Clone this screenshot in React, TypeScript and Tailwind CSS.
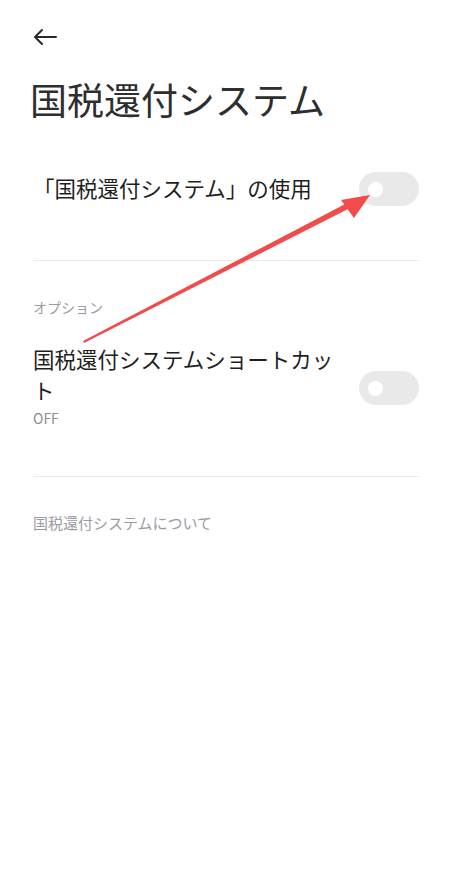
import React from 'react';

const font = { fontFamily: '"Noto Sans CJK JP", "Noto Sans", sans-serif' };

const Toggle = ({ className = '' }: { className?: string }) => (
    <div className={`w-[60px] h-[34px] rounded-full bg-[#e9e9e9] flex items-center pl-[9px] shrink-0 ${className}`}>
        <div className="w-[15px] h-[15px] rounded-full bg-white" />
    </div>
);

export default function App() {
    return (
        <div className="relative w-[454px] h-[878px] bg-white text-[#1f1f1f] overflow-hidden" style={font}>
            {/* header */}
            <div className="pl-[32px] pt-[26px]">
                <svg width="26" height="22" viewBox="0 0 26 22" fill="none" stroke="#2a2a2a" strokeWidth="2" strokeLinecap="round" strokeLinejoin="round">
                    <path d="M24 11H3M10 4l-7 7 7 7" />
                </svg>
            </div>
            <h1 className="pl-[30px] mt-[29px] text-[37px] leading-[44px] font-normal text-[#2e2e2e]">国税還付システム</h1>

            <div className="px-[33px] pr-[35px]">
                {/* row 1 */}
                <div className="flex items-center justify-between mt-[43px] h-[50px]">
                    <div className="text-[21.5px] leading-[28px] -mt-[3px]">「国税還付システム」の使用</div>
                    <Toggle />
                </div>
                <div className="h-px bg-[#ececec] mt-[46px]" />

                <div className="mt-[36px] text-[14px] leading-[20px] text-[#9b9ba5]">オプション</div>

                {/* row 2 */}
                <div className="flex items-start justify-between mt-[26px]">
                    <div className="w-[310px]">
                        <div className="text-[21.5px] leading-[31px]">国税還付システムショートカット</div>
                        <div className="text-[14px] leading-[18px] text-[#8e8e8e] mt-[4px]">OFF</div>
                    </div>
                    <Toggle className="mt-[28px]" />
                </div>
                <div className="h-px bg-[#ececec] mt-[49px]" />

                <div className="mt-[36px] text-[15px] leading-[20px] text-[#9b9ba5]">国税還付システムについて</div>
            </div>

            {/* red annotation arrow */}
            <svg className="absolute left-0 top-0 pointer-events-none" width="454" height="878" viewBox="0 0 454 878">
                <polygon points="83,341 84,343 352,207 349,202" fill="#f24b4b" />
                <polygon points="370,195 341,200 354,218" fill="#f24b4b" />
            </svg>
        </div>
    );
}
